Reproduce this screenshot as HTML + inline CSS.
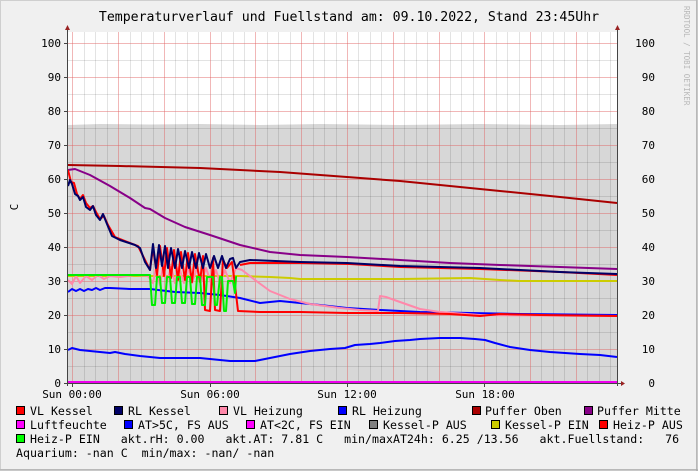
<!DOCTYPE html>
<html><head><meta charset="utf-8"><style>
html,body{margin:0;padding:0;background:#f0f0f0}
svg{display:block}
text{font-family:"DejaVu Sans Mono","Liberation Mono",monospace;fill:#000;white-space:pre}
</style></head><body>
<svg width="698" height="471" viewBox="0 0 698 471" xmlns="http://www.w3.org/2000/svg">
<rect x="0" y="0" width="698" height="471" fill="#f0f0f0"/>
<rect x="0.5" y="0.5" width="696" height="469" fill="none" stroke="#cfcfcf"/>
<line x1="697" y1="0" x2="697" y2="471" stroke="#a0a0a0"/>
<line x1="0" y1="470" x2="698" y2="470" stroke="#a0a0a0"/>
<text x="349" y="21" text-anchor="middle" font-size="13.2">Temperaturverlauf und Fuellstand am: 09.10.2022, Stand 23:45Uhr</text>
<text transform="translate(684,6) rotate(90)" font-size="7.5" style="fill:#b8b8b8">RRDTOOL / TOBI OETIKER</text>
<rect x="68" y="32" width="549" height="351" fill="#ffffff"/>
<path d="M68,125 L100,124 L150,124.5 L200,124 L260,125 L320,124 L400,125 L480,124 L560,125 L617,124 L617,383 L68,383 Z" fill="#d7d7d7"/>
<g stroke="#000" stroke-opacity="0.11" stroke-width="1">
<path d="M84.5,32V383M95.5,32V383M107.5,32V383M130.5,32V383M141.5,32V383M153.5,32V383M175.5,32V383M187.5,32V383M198.5,32V383M221.5,32V383M233.5,32V383M244.5,32V383M267.5,32V383M278.5,32V383M290.5,32V383M313.5,32V383M324.5,32V383M336.5,32V383M358.5,32V383M370.5,32V383M381.5,32V383M404.5,32V383M416.5,32V383M427.5,32V383M450.5,32V383M461.5,32V383M473.5,32V383M496.5,32V383M507.5,32V383M519.5,32V383M541.5,32V383M553.5,32V383M564.5,32V383M587.5,32V383M599.5,32V383M610.5,32V383"/>
<path d="M68,366.5H617M68,332.5H617M68,298.5H617M68,264.5H617M68,230.5H617M68,196.5H617M68,162.5H617M68,128.5H617M68,94.5H617M68,60.5H617"/>
</g>
<g stroke="#e06060" stroke-opacity="0.45" stroke-width="1">
<path d="M72.5,32V383M118.5,32V383M164.5,32V383M210.5,32V383M255.5,32V383M301.5,32V383M347.5,32V383M393.5,32V383M439.5,32V383M484.5,32V383M530.5,32V383M576.5,32V383"/>
<path d="M68,349.5H617M68,315.5H617M68,281.5H617M68,247.5H617M68,213.5H617M68,179.5H617M68,145.5H617M68,111.5H617M68,77.5H617M68,43.5H617"/>
</g>
<g fill="none" stroke-width="2" stroke-linejoin="round">
<path stroke="#aa0000" d="M68,165 L120,166 L200,168 L280,172 L347,177 L400,181 L450,186 L500,191 L560,197 L617,203"/>
<path stroke="#880088" d="M68,170 L75,169 L90,175 L110,186 L130,198 L145,208 L150,209 L165,218 L185,227 L210,235 L240,245 L270,252 L300,255 L347,257 L400,260 L450,263 L500,265 L560,267 L617,269"/>
<path stroke="#0000ff" d="M68,350 L72,348 L80,350 L90,351 L100,352 L110,353 L115,352 L125,354 L140,356 L160,358 L200,358 L230,361 L255,361 L270,358 L290,354 L310,351 L330,349 L345,348 L355,345 L370,344 L380,343 L395,341 L410,340 L420,339 L440,338 L460,338 L475,339 L485,340 L495,343 L510,347 L530,350 L550,352 L580,354 L600,355 L617,357"/>
<path stroke="#0000ff" d="M68,292 L72,289 L76,291 L80,289 L84,291 L88,289 L92,290 L96,288 L100,290 L105,288 L110,288 L130,289 L150,289 L175,292 L200,293 L220,295 L240,298 L260,303 L280,301 L300,303 L320,305 L347,308 L380,310 L420,312 L470,313 L520,314 L617,315"/>
<path stroke="#cccc00" d="M68,276 L240,276 L270,277 L290,278 L300,279 L400,279 L470,278 L500,280 L520,281 L617,281"/>
<path stroke="#ff88aa" d="M68,280 L72,284 L76,276 L80,283 L86,276 L92,280 L98,275 L104,279 L110,276 L120,277 L135,275 L148,276 L153,283 L156,268 L160,285 L163,266 L167,282 L171,267 L175,283 L179,267 L184,283 L188,267 L192,283 L197,268 L201,282 L206,268 L211,283 L216,270 L220,283 L225,270 L230,283 L236,268 L242,270 L255,280 L270,291 L290,299 L310,304 L340,308 L360,310 L378,311 L380,296 L386,297 L400,302 L420,309 L440,312 L480,315 L617,316"/>
<path stroke="#ff0000" d="M68,170 L71,182 L74,183 L77,194 L80,199 L83,195 L86,203 L90,208 L93,206 L96,212 L100,219 L104,216 L108,225 L115,237 L125,241 L138,246 L144,258 L150,270 L153,248 L157,275 L160,246 L164,276 L167,248 L171,278 L174,250 L178,280 L181,252 L185,280 L188,253 L192,282 L195,254 L200,282 L203,256 L205,310 L210,311 L213,258 L215,310 L220,311 L223,260 L227,268 L232,262 L235,285 L238,311 L260,312 L300,312 L347,313 L400,313 L450,314 L480,316 L500,314 L540,315 L617,316"/>
<path stroke="#ff0000" d="M240,265 L250,263 L300,263 L350,264 L400,267 L480,269 L560,272 L617,275"/>
<path stroke="#000066" d="M68,186 L70,180 L72,184 L75,194 L78,196 L80,200 L83,197 L86,207 L90,210 L93,206 L96,215 L100,220 L103,214 L107,224 L112,236 L120,240 L135,245 L140,248 L145,262 L150,270 L153,244 L156,268 L159,245 L162,266 L165,246 L168,268 L171,248 L175,268 L178,249 L182,268 L185,251 L189,268 L192,252 L196,268 L199,253 L203,268 L206,254 L210,268 L214,256 L218,268 L222,256 L226,268 L230,259 L233,258 L236,268 L240,262 L250,260 L300,262 L347,263 L400,266 L480,268 L560,272 L617,274"/>
<path stroke="#00ee00" d="M68,275 L150,275 L152,305 L155,305 L157,277 L160,277 L162,303 L165,303 L167,277 L170,277 L172,303 L175,303 L177,277 L180,277 L182,303 L185,303 L187,277 L190,277 L192,304 L195,304 L197,277 L200,277 L202,305 L205,305 L207,277 L213,277 L215,305 L217,305 L220,277 L222,277 L224,311 L226,311 L228,281 L233,281 L235,293 L236,277 L237,277"/>
<path stroke="#ee00ee" d="M68,382 L617,382"/>
</g>
<line x1="67.5" y1="28" x2="67.5" y2="386" stroke="#444"/>
<line x1="617.5" y1="28" x2="617.5" y2="386" stroke="#444"/>
<line x1="64" y1="383.5" x2="622" y2="383.5" stroke="#444"/>
<path d="M65,30 L70,30 L67.5,25 Z M615,30 L620,30 L617.5,25 Z M621,381 L621,386 L625,383.5 Z" fill="#992222"/>
<g stroke="#444"><path d="M64,43.5h4M64,77.5h4M64,111.5h4M64,145.5h4M64,179.5h4M64,213.5h4M64,247.5h4M64,281.5h4M64,315.5h4M64,349.5h4M72.5,383v4M210.5,383v4M347.5,383v4M484.5,383v4"/></g>
<g font-size="11" text-anchor="end">
<text x="61" y="47">100</text><text x="61" y="81">90</text><text x="61" y="115">80</text><text x="61" y="149">70</text><text x="61" y="183">60</text><text x="61" y="217">50</text><text x="61" y="251">40</text><text x="61" y="285">30</text><text x="61" y="319">20</text><text x="61" y="353">10</text><text x="61" y="387">0</text>
<text x="655" y="47">100</text><text x="655" y="81">90</text><text x="655" y="115">80</text><text x="655" y="149">70</text><text x="655" y="183">60</text><text x="655" y="217">50</text><text x="655" y="251">40</text><text x="655" y="285">30</text><text x="655" y="319">20</text><text x="655" y="353">10</text><text x="655" y="387">0</text>
</g>
<text transform="translate(18,207) rotate(-90)" font-size="11" text-anchor="middle">C</text>
<g font-size="11" text-anchor="middle">
<text x="72" y="398">Sun 00:00</text><text x="210" y="398">Sun 06:00</text><text x="347" y="398">Sun 12:00</text><text x="485" y="398">Sun 18:00</text>
</g>
<g stroke="#000" stroke-width="1">
<rect x="16.5" y="406.5" width="8" height="8" fill="#ff0000"/>
<rect x="114.5" y="406.5" width="8" height="8" fill="#000066"/>
<rect x="219.5" y="406.5" width="8" height="8" fill="#ff88aa"/>
<rect x="338.5" y="406.5" width="8" height="8" fill="#0000ff"/>
<rect x="472.5" y="406.5" width="8" height="8" fill="#aa0000"/>
<rect x="584.5" y="406.5" width="8" height="8" fill="#880088"/>
<rect x="16.5" y="420.5" width="8" height="8" fill="#ff00ff"/>
<rect x="124.5" y="420.5" width="8" height="8" fill="#0000ff"/>
<rect x="246.5" y="420.5" width="8" height="8" fill="#ff00ff"/>
<rect x="369.5" y="420.5" width="8" height="8" fill="#808080"/>
<rect x="491.5" y="420.5" width="8" height="8" fill="#cccc00"/>
<rect x="599.5" y="420.5" width="8" height="8" fill="#ff0000"/>
<rect x="16.5" y="434.5" width="8" height="8" fill="#00ff00"/>
</g>
<g font-size="11.6">
<text x="30" y="415">VL Kessel</text>
<text x="128" y="415">RL Kessel</text>
<text x="233" y="415">VL Heizung</text>
<text x="352" y="415">RL Heizung</text>
<text x="485" y="415">Puffer Oben</text>
<text x="597" y="415">Puffer Mitte</text>
<text x="30" y="429">Luftfeuchte</text>
<text x="138" y="429">AT&gt;5C, FS AUS</text>
<text x="260" y="429">AT&lt;2C, FS EIN</text>
<text x="383" y="429">Kessel-P AUS</text>
<text x="505" y="429">Kessel-P EIN</text>
<text x="613" y="429">Heiz-P AUS</text>
<text x="30" y="443">Heiz-P EIN   akt.rH: 0.00   akt.AT: 7.81 C   min/maxAT24h: 6.25 /13.56   akt.Fuellstand:   76</text>
<text x="16" y="457">Aquarium: -nan C  min/max: -nan/ -nan</text>
</g>
</svg>
</body></html>
